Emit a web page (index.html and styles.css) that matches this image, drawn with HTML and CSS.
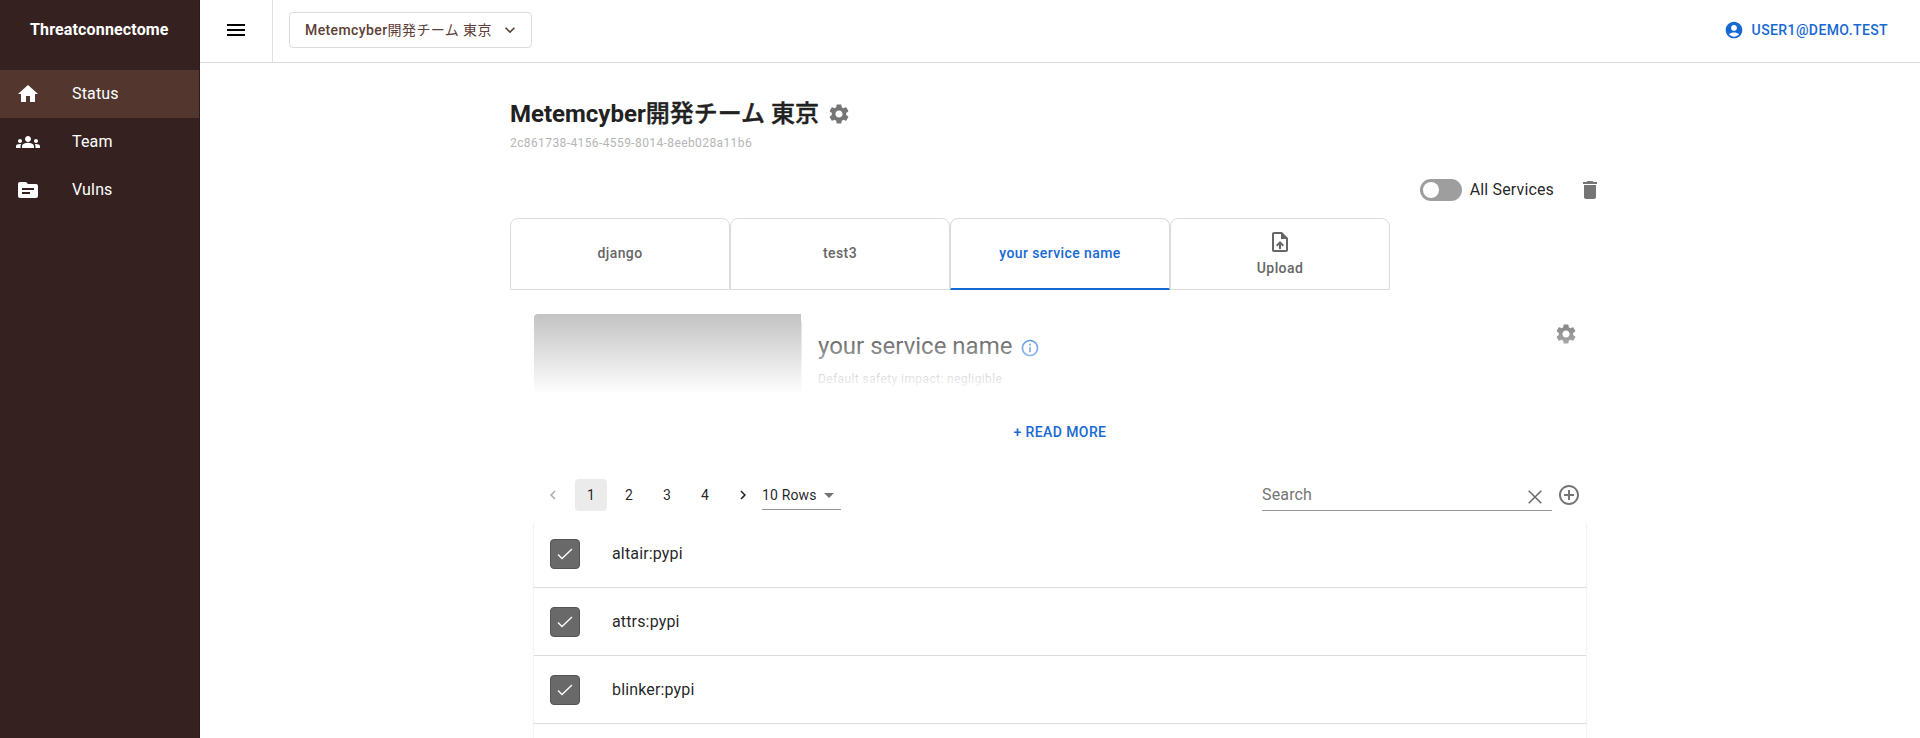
FILE: index.html
```html
<!DOCTYPE html>
<html lang="en">
<head>
<meta charset="utf-8">
<title>Threatconnectome</title>
<link rel="stylesheet" href="styles.css">
</head>
<body>
<div class="app">
  <aside class="sidebar">
    <div class="brand">Threatconnectome</div>
    <nav class="nav">
      <a class="nav-item active"><svg class="icon" viewBox="0 0 24 24"><path d="M10 20v-6h4v6h5v-8h3L12 3 2 12h3v8z"/></svg><span>Status</span></a>
      <a class="nav-item"><svg class="icon" viewBox="0 0 24 24"><path d="M12 12.75c1.63 0 3.07.39 4.24.9 1.08.48 1.76 1.56 1.76 2.73V18H6v-1.61c0-1.18.68-2.26 1.76-2.73 1.17-.52 2.61-.91 4.24-.91zM4 13c1.1 0 2-.9 2-2s-.9-2-2-2-2 .9-2 2 .9 2 2 2zm1.13 1.1c-.37-.06-.74-.1-1.13-.1-.99 0-1.93.21-2.78.58C.48 14.9 0 15.62 0 16.43V18h4.5v-1.61c0-.83.23-1.61.63-2.29zM20 13c1.1 0 2-.9 2-2s-.9-2-2-2-2 .9-2 2 .9 2 2 2zm4 3.43c0-.81-.48-1.53-1.22-1.85-.85-.37-1.79-.58-2.78-.58-.39 0-.76.04-1.13.1.4.68.63 1.46.63 2.29V18H24v-1.57zM12 6c1.66 0 3 1.34 3 3s-1.34 3-3 3-3-1.34-3-3 1.34-3 3-3z"/></svg><span>Team</span></a>
      <a class="nav-item"><svg class="icon" viewBox="0 0 24 24"><path d="M20 6h-8l-2-2H4c-1.1 0-1.99.9-1.99 2L2 18c0 1.1.9 2 2 2h16c1.1 0 2-.9 2-2V8c0-1.1-.9-2-2-2zm-6 10H6v-2h8v2zm4-4H6v-2h12v2z"/></svg><span>Vulns</span></a>
    </nav>
  </aside>
  <div class="page">
    <header class="topbar">
      <button class="menu"><svg class="icon" viewBox="0 0 24 24"><path d="M3 18h18v-2H3v2zm0-5h18v-2H3v2zm0-7v2h18V6H3z"/></svg></button>
      <div class="topbar-main">
        <button class="team-select"><span>Metemcyber<span class="ja">開発チーム 東京</span></span><svg class="icon small" viewBox="0 0 24 24"><path d="M7.41 8.59 12 13.17l4.59-4.58L18 10l-6 6-6-6z"/></svg></button>
        <button class="user"><svg class="icon small" viewBox="0 0 24 24"><path d="M12 2C6.48 2 2 6.48 2 12s4.48 10 10 10 10-4.48 10-10S17.52 2 12 2zm0 4c1.93 0 3.5 1.57 3.5 3.5S13.93 13 12 13s-3.5-1.57-3.5-3.5S10.07 6 12 6zm0 14c-2.03 0-4.43-.82-6.14-2.88C7.55 15.8 9.68 15 12 15s4.45.8 6.14 2.12C16.43 19.18 14.03 20 12 20z"/></svg>USER1@DEMO.TEST</button>
      </div>
    </header>
    <main class="content">
      <div class="team-head">
        <h1>Metemcyber<span class="ja-head">開発チーム 東京</span></h1>
        <svg class="icon muted" viewBox="0 0 24 24"><path d="M19.14 12.94c.04-.3.06-.61.06-.94 0-.32-.02-.64-.07-.94l2.03-1.58c.18-.14.23-.41.12-.61l-1.92-3.32c-.12-.22-.37-.29-.59-.22l-2.39.96c-.5-.38-1.03-.7-1.62-.94l-.36-2.54c-.04-.24-.24-.41-.48-.41h-3.84c-.24 0-.43.17-.47.41l-.36 2.54c-.59.24-1.13.57-1.62.94l-2.39-.96c-.22-.08-.47 0-.59.22L2.74 8.87c-.12.21-.08.47.12.61l2.03 1.58c-.05.3-.09.63-.09.94s.02.64.07.94l-2.03 1.58c-.18.14-.23.41-.12.61l1.92 3.32c.12.22.37.29.59.22l2.39-.96c.5.38 1.03.7 1.62.94l.36 2.54c.05.24.24.41.48.41h3.84c.24 0 .44-.17.47-.41l.36-2.54c.59-.24 1.13-.56 1.62-.94l2.39.96c.22.08.47 0 .59-.22l1.92-3.32c.12-.22.07-.47-.12-.61l-2.01-1.58zM12 15.6c-1.98 0-3.6-1.62-3.6-3.6s1.62-3.6 3.6-3.6 3.6 1.62 3.6 3.6-1.62 3.6-3.6 3.6z"/></svg>
      </div>
      <div class="uuid">2c861738-4156-4559-8014-8eeb028a11b6</div>
      <div class="service-tools">
        <span class="switch"></span>
        <span class="switch-label">All Services</span>
        <svg class="icon muted" viewBox="0 0 24 24"><path d="M6 19c0 1.1.9 2 2 2h8c1.1 0 2-.9 2-2V7H6v12zM19 4h-3.500l-1-1h-5l-1 1H5v2h14V4z"/></svg>
      </div>
      <div class="tabs">
        <div class="tab">django</div>
        <div class="tab">test3</div>
        <div class="tab selected">your service name</div>
        <div class="tab"><svg class="icon" viewBox="0 0 24 24"><path d="M14 2H6c-1.100 0-1.990.9-1.990 2L4 20c0 1.100.89 2 1.990 2H18c1.100 0 2-.9 2-2V8l-6-6zm4 18H6V4h7v5h5v11zM8 15.010l1.410 1.410L11 14.840V19h2v-4.160l1.590 1.590L16 15.010 12.010 11 8 15.010z"/></svg>Upload</div>
      </div>
      <section class="panel">
        <div class="service-card">
          <div class="thumb"></div>
          <div class="service-text">
            <div class="service-title">your service name<svg class="icon small info" viewBox="0 0 24 24"><path d="M11 7h2v2h-2zm0 4h2v6h-2zm1-9C6.480 2 2 6.480 2 12s4.480 10 10 10 10-4.480 10-10S17.520 2 12 2zm0 18c-4.410 0-8-3.590-8-8s3.590-8 8-8 8 3.590 8 8-3.590 8-8 8z"/></svg></div>
            <div class="impact">Default safety impact: negligible</div>
          </div>
          <svg class="icon muted card-gear" viewBox="0 0 24 24"><path d="M19.14 12.94c.04-.3.06-.61.06-.94 0-.32-.02-.64-.07-.94l2.03-1.58c.18-.14.23-.41.12-.61l-1.92-3.32c-.12-.22-.37-.29-.59-.22l-2.39.96c-.5-.38-1.03-.7-1.62-.94l-.36-2.54c-.04-.24-.24-.41-.48-.41h-3.84c-.24 0-.43.17-.47.41l-.36 2.54c-.59.24-1.13.57-1.62.94l-2.39-.96c-.22-.08-.47 0-.59.22L2.74 8.87c-.12.21-.08.47.12.61l2.03 1.58c-.05.3-.09.63-.09.94s.02.64.07.94l-2.03 1.58c-.18.14-.23.41-.12.61l1.92 3.32c.12.22.37.29.59.22l2.39-.96c.5.38 1.03.7 1.62.94l.36 2.54c.05.24.24.41.48.41h3.84c.24 0 .44-.17.47-.41l.36-2.54c.59-.24 1.13-.56 1.62-.94l2.39.96c.22.08.47 0 .59-.22l1.92-3.32c.12-.22.07-.47-.12-.61l-2.01-1.58zM12 15.6c-1.98 0-3.6-1.62-3.6-3.6s1.62-3.6 3.6-3.6 3.6 1.62 3.6 3.6-1.62 3.6-3.6 3.6z"/></svg>
        </div>
        <button class="read-more">+ READ MORE</button>
        <div class="list-tools">
          <div class="pagination">
            <span class="pg disabled"><svg class="icon page-arrow" viewBox="0 0 24 24"><path d="M15.410 7.410 14 6l-6 6 6 6 1.410-1.410L10.830 12z"/></svg></span>
            <span class="pg current">1</span><span class="pg">2</span><span class="pg">3</span><span class="pg">4</span>
            <span class="pg"><svg class="icon page-arrow" viewBox="0 0 24 24"><path d="M10 6 8.590 7.410 13.170 12l-4.580 4.590L10 18l6-6z"/></svg></span>
          </div>
          <div class="rows-select"><span>10 Rows</span><svg class="icon muted" viewBox="0 0 24 24"><path d="m7 10 5 5 5-5z"/></svg></div>
          <div class="search"><span>Search</span><svg class="clear" viewBox="0 0 14 14"><path d="M.7.7l12.600 12.600M13.300.7.7 13.300"/></svg></div>
          <svg class="icon muted add" viewBox="0 0 24 24"><path d="M13 7h-2v4H7v2h4v4h2v-4h4v-2h-4V7zm-1-5C6.480 2 2 6.480 2 12s4.480 10 10 10 10-4.480 10-10S17.520 2 12 2zm0 18c-4.410 0-8-3.590-8-8s3.590-8 8-8 8 3.590 8 8-3.590 8-8 8z"/></svg>
        </div>
        <div class="list">
          <div class="row"><span class="check"><svg viewBox="0 0 16 12"><path d="M1 6.500l4 4L15 1"/></svg></span>altair:pypi</div>
          <div class="row"><span class="check"><svg viewBox="0 0 16 12"><path d="M1 6.500l4 4L15 1"/></svg></span>attrs:pypi</div>
          <div class="row"><span class="check"><svg viewBox="0 0 16 12"><path d="M1 6.500l4 4L15 1"/></svg></span>blinker:pypi</div>
          <div class="row"></div>
        </div>
      </section>
    </main>
  </div>
</div>
</body>
</html>
```
FILE: styles.css
```css
* { box-sizing: border-box; }
body {
  margin: 0;
  font-family: Roboto, "Noto Sans CJK JP", sans-serif;
  font-size: 16px;
  letter-spacing: 0.15px;
  line-height: 24px;
  color: rgba(0, 0, 0, 0.87);
  background: #fff;
}
button { font: inherit; background: none; border: 0; padding: 0; color: inherit; }
.app { display: flex; height: 738px; overflow: hidden; }
.icon { width: 24px; height: 24px; fill: currentColor; flex: none; display: block; }
.small { width: 20px; height: 20px; }
.muted { color: #757575; }

.sidebar { width: 200px; flex: none; background: #352220; color: #fff; border-right: 1px solid #2e1c1a; }
.brand { height: 70px; padding: 18px 0 0 30px; font-weight: 700; letter-spacing: 0.15px; }
.nav-item { display: flex; align-items: center; gap: 32px; height: 48px; padding-left: 16px; }
.active { background: #53372f; }

.page { flex: 1; min-width: 0; }
.topbar { display: flex; height: 63px; border-bottom: 1px solid #dcdcdc; }
.menu { width: 73px; padding: 0 0 2px 24px; border-right: 1px solid #e0e0e0; color: #000; }
.topbar-main { flex: 1; display: flex; justify-content: space-between; align-items: center; padding: 0 32px 2px 16px; }
.team-select {
  display: flex; align-items: center; gap: 8px;
  height: 36px; padding: 0 11px 0 15px;
  border: 1px solid #dcdcdc; border-radius: 4px;
  font-size: 14px; font-weight: 500; letter-spacing: 0.4px; color: #5d4037;
}
.ja { font-weight: 400; }
.ja-head { font-weight: 500; -webkit-text-stroke: 0.4px currentColor; }
.user { display: flex; align-items: center; gap: 8px; font-size: 14px; font-weight: 500; letter-spacing: 0.4px; color: #1769d2; }

.content { width: 1100px; margin-left: 310px; padding-top: 35px; }
.team-head { display: flex; align-items: center; gap: 8px; height: 32px; }
h1 { margin: 0; font-size: 24px; line-height: 32px; font-weight: 700; letter-spacing: 0; color: #212121; }
.uuid { margin-top: 3px; font-size: 12px; line-height: 20px; letter-spacing: 0.4px; color: #b5b5b5; }
.service-tools { display: flex; align-items: center; justify-content: flex-end; height: 40px; margin-top: 17px; padding-right: 8px; }
.switch { width: 42px; height: 22px; padding: 3px; border-radius: 11px; background: #9e9e9e; }
.switch::before { content: ""; display: block; width: 16px; height: 16px; border-radius: 50%; background: #fff; }
.switch-label { margin: 0 24px 0 8px; }

.tabs { display: flex; width: 880px; height: 72px; margin-top: 8px; }
.tab {
  width: 220px; display: flex; flex-direction: column; align-items: center; justify-content: center;
  gap: 6px; border: 1px solid #dcdcdc; border-radius: 8px 8px 0 0;
  font-size: 14px; line-height: 17.500px; font-weight: 500; letter-spacing: 0.4px; color: #666;
}
.selected { color: #1769d2; border-bottom: 2px solid #1769d2; }

.panel { padding: 24px 24px 0; display: flex; flex-direction: column; }
.service-card {
  position: relative; display: flex; height: 80px; overflow: hidden; border-radius: 4px 4px 0 0;
}
.service-card::after {
  content: ""; position: absolute; inset: 0;
  background: linear-gradient(rgba(255, 255, 255, 0), #fff);
}
.thumb { width: 267px; background: #c3c3c3; box-shadow: 1px 8px 0 #dedede; }
.service-text { flex: 1; padding: 16px 0 0 17px; }
.service-title { display: flex; align-items: center; gap: 8px; font-size: 24px; line-height: 32px; letter-spacing: 0; color: #212121; }
.info { margin-top: 4px; color: #1769d2; }
.impact { margin-top: 7px; font-size: 12px; line-height: 20px; letter-spacing: 0.4px; color: #666; }
.card-gear { margin: 8px 8px 0 0; }
.read-more { align-self: center; height: 36px; margin-top: 20px; font-size: 14px; font-weight: 500; letter-spacing: 0.4px; color: #1769d2; }

.list-tools { display: flex; align-items: center; height: 50px; margin-top: 20px; }
.pagination { display: flex; }
.pg { display: flex; align-items: center; justify-content: center; width: 32px; height: 32px; margin: 0 3px; border-radius: 4px; font-size: 14px; }
.current { background: #ebebeb; }
.disabled { opacity: 0.38; }
.page-arrow { width: 18px; height: 18px; }
.rows-select { display: flex; align-items: center; justify-content: space-between; width: 79px; height: 30px; border-bottom: 1px solid #949494; font-size: 14px; }
.search { display: flex; align-items: center; justify-content: space-between; width: 290px; height: 32px; margin-left: auto; padding-right: 10px; border-bottom: 1px solid #949494; color: #757575; }
.clear { width: 14px; height: 14px; margin-top: 5px; fill: none; stroke: #666; stroke-width: 1.5; }
.add { margin: 0 5px; }

.list { border-radius: 4px 4px 0 0; box-shadow: 0 1px 2px rgba(0, 0, 0, 0.18); }
.row { display: flex; align-items: center; gap: 32px; height: 68px; padding-left: 16px; border-bottom: 1px solid #dcdcdc; }
.check { width: 30px; height: 30px; display: grid; place-items: center; border: 1px solid #555; border-radius: 4px; background: #696969; }
.check svg { width: 16px; height: 12px; fill: none; stroke: #fff; stroke-width: 1.300; }
```
